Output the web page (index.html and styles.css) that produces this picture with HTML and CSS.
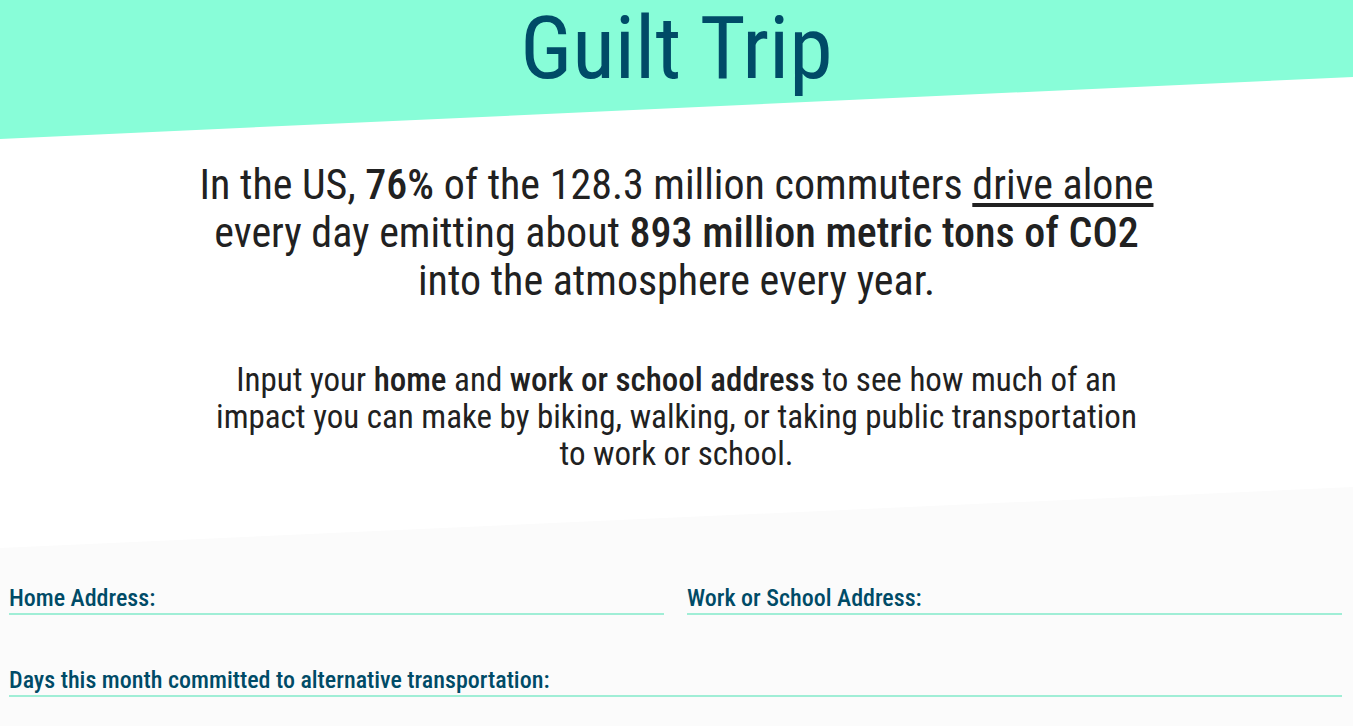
FILE: index.html
```
<!DOCTYPE html>
<html lang="en">
<head>
<meta charset="utf-8">
<meta name="viewport" content="width=device-width, initial-scale=1">
<title>Guilt Trip</title>
<link rel="stylesheet" href="styles.css">
</head>
<body>
<header class="banner">
  <h1 class="title">Guilt Trip</h1>
</header>
<main>
  <section class="intro">
    <p class="lead">In the US, <b>76%</b> of the 128.3 million commuters <u>drive alone</u><br>every day emitting about <b>893 million metric tons of CO2</b><br>into the atmosphere every year.</p>
    <p class="help">Input your <b>home</b> and <b>work or school address</b> to see how much of an<br>impact you can make by biking, walking, or taking public transportation<br>to work or school.</p>
  </section>
  <form class="commute">
    <div class="field">
      <label for="home">Home Address:</label>
      <input id="home" type="text">
    </div>
    <div class="field">
      <label for="work">Work or School Address:</label>
      <input id="work" type="text">
    </div>
    <div class="field wide">
      <label for="days">Days this month committed to alternative transportation:</label>
      <input id="days" type="text">
    </div>
  </form>
</main>
</body>
</html>
```
FILE: styles.css
```
* {
  box-sizing: border-box;
}

body {
  margin: 0;
  min-height: 100vh;
  display: flex;
  flex-direction: column;
  background: #fff;
  color: #212121;
  font-family: "Roboto Condensed", "Liberation Sans Narrow", Roboto, sans-serif;
}

main {
  flex: 1;
  display: flex;
  flex-direction: column;
}

.banner {
  position: relative;
  z-index: 0;
  padding-bottom: 43px;
  color: #004b67;
  text-align: center;
}

.banner::before {
  content: "";
  position: absolute;
  inset: 0;
  z-index: -1;
  background: #88fdd8;
  clip-path: polygon(0 0, 100% 0, 100% calc(100% - 62px), 0 100%);
}

.title {
  margin: 0;
  font-size: 88px;
  line-height: 96px;
  font-weight: 400;
}

.intro {
  padding: 22px 16px 15px;
  text-align: center;
}

.lead,
.help {
  margin: 0;
}

.lead {
  font-size: 42px;
  line-height: 48px;
}

.help {
  margin-top: 56px;
  font-size: 33px;
  line-height: 37px;
}

.intro b {
  font-weight: 500;
}

.lead u {
  text-decoration-thickness: 4px;
  text-underline-offset: 4px;
  text-decoration-skip-ink: none;
}

.commute {
  flex: 1;
  display: grid;
  grid-template-columns: 1fr 1fr;
  align-content: start;
  gap: 50px 23px;
  padding: 96px 11px 29px 9px;
  background: #fbfbfb;
  clip-path: polygon(0 61px, 100% 0, 100% 100%, 0 100%);
}

.field {
  display: flex;
  align-items: flex-end;
  border-bottom: 2px solid #a0eed6;
}

.wide {
  grid-column: 1 / -1;
}

.field label {
  color: #004b67;
  font-size: 24px;
  line-height: 30px;
  font-weight: 500;
}

.field input {
  flex: 1;
  min-width: 0;
  height: 30px;
  padding: 0 8px;
  border: 0;
  outline: 0;
  background: transparent;
  color: #212121;
  font: inherit;
  font-size: 24px;
}
```
